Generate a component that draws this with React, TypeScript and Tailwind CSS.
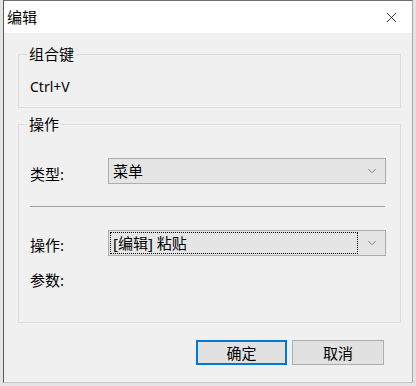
import { ChevronDown, X } from "lucide-react"

const font = { fontFamily: '"Noto Sans", "Noto Sans CJK SC", sans-serif' }

function Select({ value, focused }: { value: string; focused?: boolean }) {
  return (
    <div className="flex h-[26px] w-[278px] items-center border border-[#adadad] bg-[#e5e5e5] pl-[1px] pr-[6px]">
      <div
        className={`flex h-[22px] flex-1 items-center px-[2px] text-[15px] leading-[18px] ${
          focused ? "border border-dotted border-black" : "border border-transparent"
        }`}
      >
        {value}
      </div>
      <ChevronDown className="ml-[7px] size-[14px] text-[#666]" strokeWidth={1.3} />
    </div>
  )
}

export default function App() {
  return (
    <div className="h-[386px] w-[416px] overflow-hidden bg-[#e4e4e4] text-black" style={font}>
      <div className="ml-[3px] flex h-[383px] w-[410px] flex-col border-t border-l border-r border-b border-t-[#707070] border-l-[#5a5a5a] border-r-[#a8a8a8] border-b-[#c8c8c8] bg-[#f0f0f0]">
        {/* title bar */}
        <div className="flex h-[32px] items-center justify-between bg-white pl-[3px] pr-[12px]">
          <span className="text-[15px] leading-[18px]">编辑</span>
          <X className="size-[17px]" strokeWidth={1.1} />
        </div>

        <div className="flex flex-col pl-[14px] pt-[12px]">
          <fieldset className="w-[383px] border border-[#dcdcdc] pb-[11px] pl-[11px]">
            <legend className="ml-[-3px] px-[2px] text-[15px] leading-[18px]">组合键</legend>
            <div className="pt-[15px] text-[14px] leading-[18px]">Ctrl+V</div>
          </fieldset>

          <fieldset className="mt-[7px] w-[383px] border border-[#dcdcdc] pb-[33px] pl-[11px]">
            <legend className="ml-[-3px] px-[2px] text-[15px] leading-[18px]">操作</legend>
            <div className="mt-[25px] flex items-center">
              <span className="mt-[6px] w-[78px] text-[15px] leading-[18px]">类型:</span>
              <Select value="菜单" />
            </div>
            <div className="mt-[22px] h-px w-[355px] bg-[#a0a0a0]" />
            <div className="mt-[23px] flex items-center">
              <span className="mt-[3px] w-[78px] text-[15px] leading-[18px]">操作:</span>
              <Select value="[编辑] 粘贴" focused />
            </div>
            <div className="mt-[15px] text-[15px] leading-[18px]">参数:</div>
          </fieldset>

          <div className="mt-[17px] flex w-[366px] justify-end gap-[5px]">
            <button className="h-[25px] w-[91px] border-2 border-[#0078d7] bg-[#e1e1e1] text-[15px] leading-[18px]">
              确定
            </button>
            <button className="h-[25px] w-[92px] border border-[#adadad] bg-[#e1e1e1] text-[15px] leading-[18px]">
              取消
            </button>
          </div>
        </div>
      </div>
    </div>
  )
}
